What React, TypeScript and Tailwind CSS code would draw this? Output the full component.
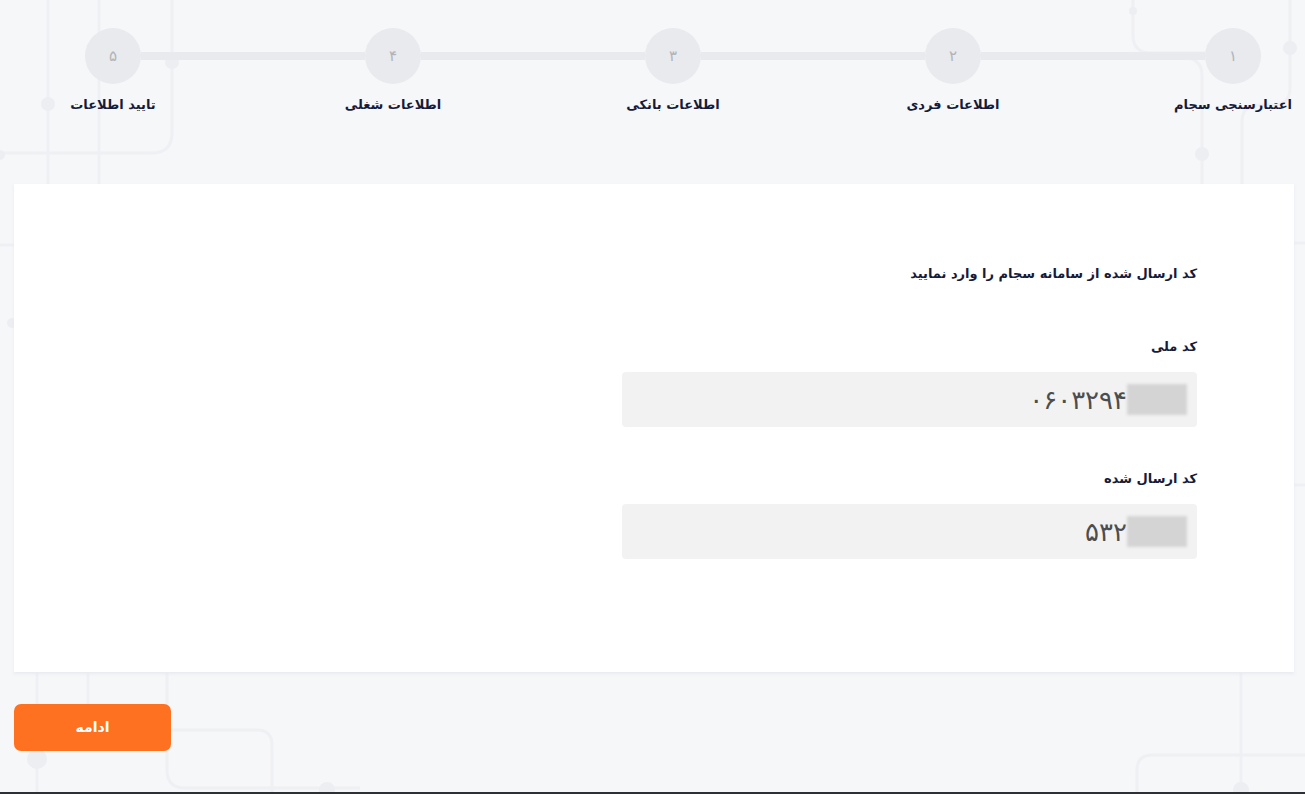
import React from 'react'

const steps = [
  { num: '۱', title: 'اعتبارسنجی سجام' },
  { num: '۲', title: 'اطلاعات فردی' },
  { num: '۳', title: 'اطلاعات بانکی' },
  { num: '۴', title: 'اطلاعات شغلی' },
  { num: '۵', title: 'تایید اطلاعات' }
]

const fields = [
  { label: 'کد ملی', value: '۰۶۰۳۲۹۴' },
  { label: 'کد ارسال شده', value: '۵۳۲' }
]

function Backdrop() {
  return (
    <svg
      className="pointer-events-none absolute inset-0 h-full w-full"
      viewBox="0 0 1305 794"
      preserveAspectRatio="none"
      fill="none"
    >
      <g stroke="#eff0f4" strokeWidth="3">
        <path d="M48 0 V185" />
        <path d="M99 0 V185" />
        <path d="M0 153 H152 Q172 153 172 133 V0" />
        <path d="M37 673 V794" />
        <path d="M88 673 V710" />
        <path d="M167 673 V770 Q167 788 185 788 H360" />
        <path d="M167 730 H257 Q272 730 272 745 V794" />
        <path d="M1241 673 V794" />
        <path d="M1305 755 H1152 Q1137 755 1137 770 V794" />
        <path d="M1133 0 V35 Q1133 53 1151 53 H1205" />
        <path d="M1290 0 V88 Q1290 105 1273 105 H1259 Q1242 105 1242 122 V185" />
        <path d="M1180 57 Q1202 57 1202 75 V185" />
        <path d="M1294 243 H1305" />
        <path d="M1294 485 H1305" />
        <path d="M0 245 H14" />
      </g>
      <g fill="#eceef2">
        <circle cx="48" cy="104" r="7" />
        <circle cx="172" cy="62" r="7" />
        <circle cx="0" cy="155" r="5" />
        <circle cx="37" cy="759" r="10" />
        <circle cx="327" cy="790" r="8" />
        <circle cx="1241" cy="790" r="8" />
        <circle cx="1133" cy="11" r="4" />
        <circle cx="1290" cy="48" r="7" />
        <circle cx="1202" cy="154" r="7" />
        <circle cx="12" cy="323" r="5" />
      </g>
    </svg>
  )
}

function Stepper() {
  return (
    <div className="flex items-start pt-7 pr-[44px] pl-[85px]">
      {steps.map((s, index) => (
        <React.Fragment key={s.num}>
          <div className="flex w-14 flex-col items-center">
            <div className="flex h-14 w-14 items-center justify-center rounded-full bg-[#e8eaed] text-[15px] font-light text-[#b0b4ba]">
              {s.num}
            </div>
            <span className="mt-[11px] whitespace-nowrap text-[13px] leading-5 font-bold text-[#161b3a]">
              {s.title}
            </span>
          </div>
          {index < steps.length - 1 && <div className="mt-[24px] h-2 flex-1 bg-[#e8eaed]" />}
        </React.Fragment>
      ))}
    </div>
  )
}

export default function App() {
  return (
    <div
      dir="rtl"
      className="relative h-[794px] w-full overflow-hidden bg-[#f6f7f9]"
      style={{ fontFamily: '"DejaVu Sans", "Noto Sans", sans-serif' }}
    >
      <Backdrop />
      <div className="relative flex h-full flex-col">
        <Stepper />

        <div className="mt-[69px] mr-[11px] ml-[14px] h-[488px] bg-white pt-[80px] pr-[97px] shadow-[0_2px_3px_rgba(230,233,240,0.9)]">
          <div className="w-[575px]">
            <h2 className="text-[13px] leading-5 font-bold text-[#161b3a]">
              کد ارسال شده از سامانه سجام را وارد نمایید
            </h2>

            <div className="mt-[53px] flex flex-col">
              {fields.map((f, index) => (
                <div
                  key={f.label}
                  className={index > 0 ? 'mt-[42px]' : ''}
                >
                  <label className="block text-[13px] leading-5 font-bold text-[#161b3a]">
                    {f.label}
                  </label>
                  <div className="mt-[15px] flex h-[55px] items-center rounded-[4px] bg-[#f2f2f2] pr-[10px]">
                    <span className="h-[31px] w-[60px] bg-[#d4d4d4] blur-[1.5px]" />
                    <span className="text-[26px] leading-none text-[#4d4d4d]">{f.value}</span>
                  </div>
                </div>
              ))}
            </div>
          </div>
        </div>

        <div className="mt-[32px] flex justify-end pl-[14px]">
          <button className="h-[47px] w-[157px] rounded-[7px] bg-[#fd7120] text-[14px] font-bold text-white">
            ادامه
          </button>
        </div>

        <div className="mt-auto h-[2px] w-full bg-[#2d3035]" />
      </div>
    </div>
  )
}
